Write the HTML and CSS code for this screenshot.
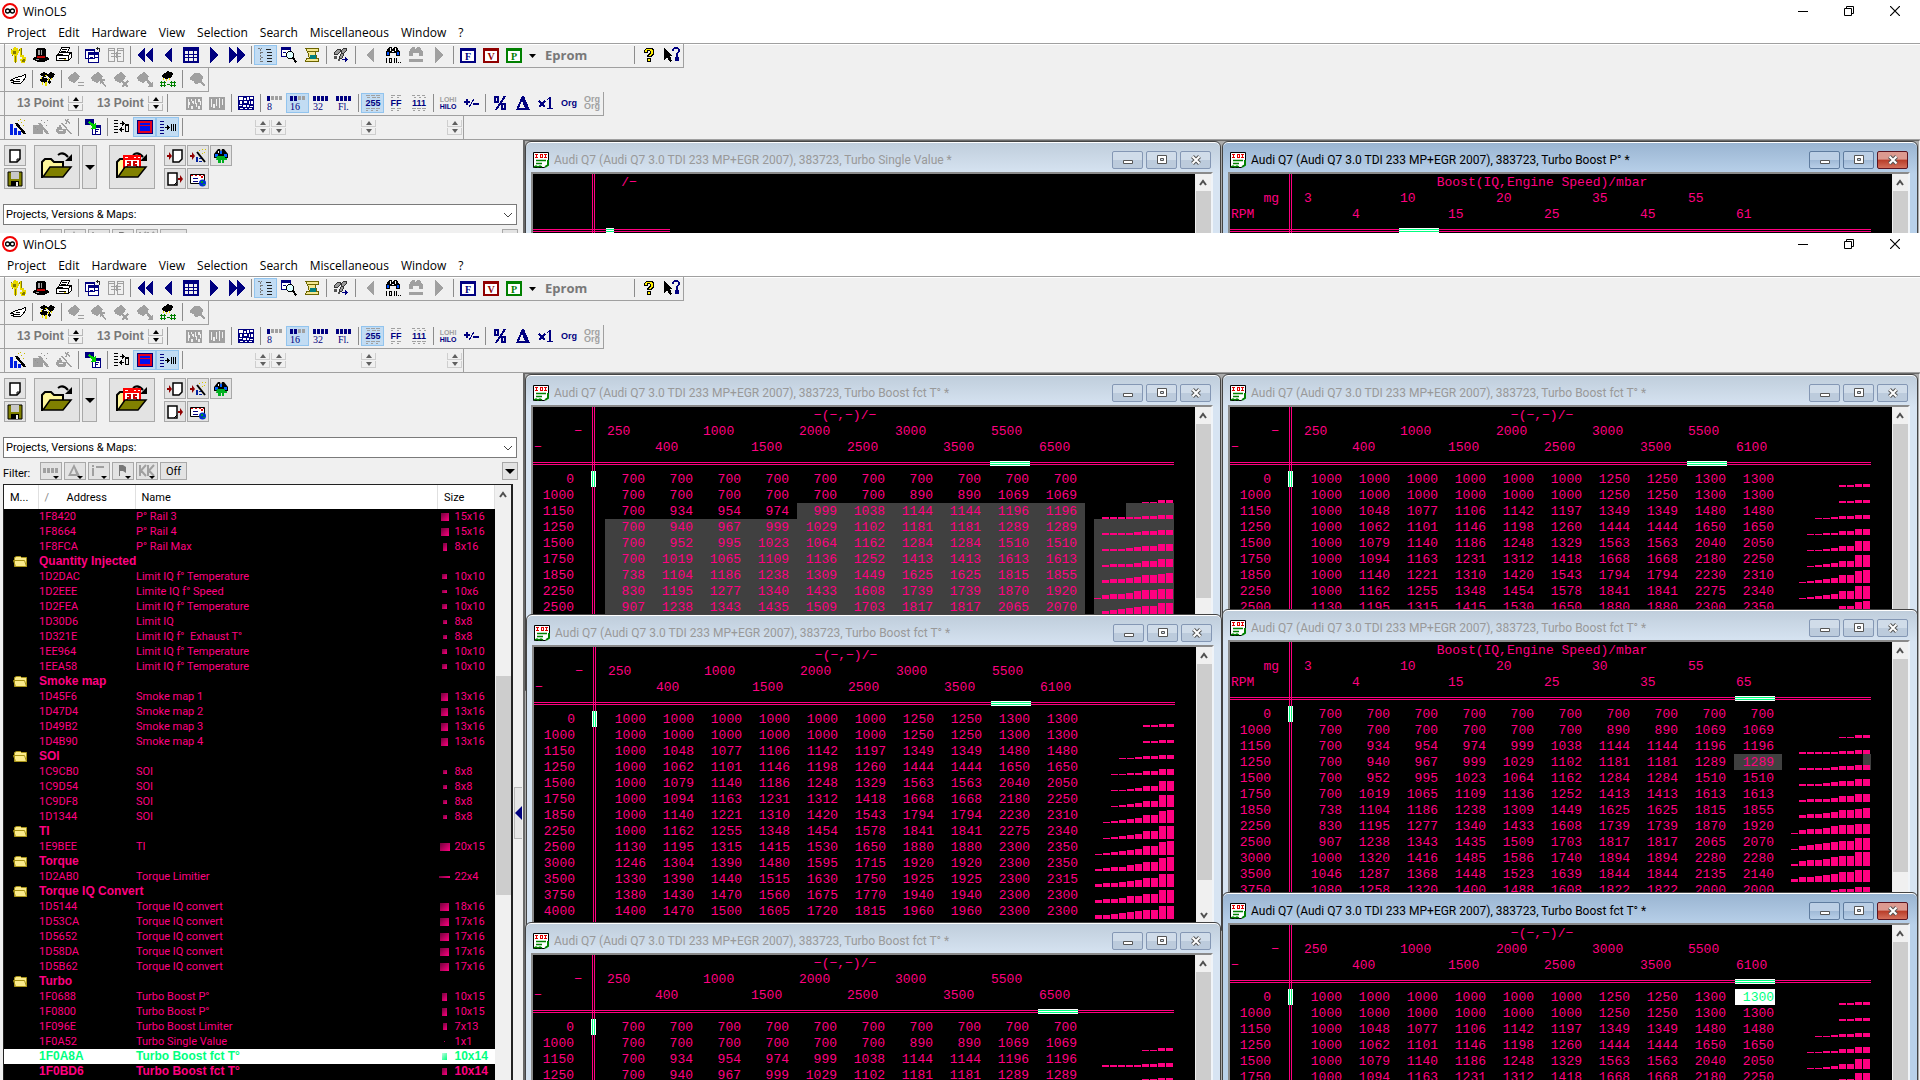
FILE: index.html
```html
<!DOCTYPE html>
<html lang="en">
    <head>
        <meta charset="utf-8">
        <title>WinOLS</title>
        <link rel="stylesheet" href="styles.css">
    </head>
    <body>

        <!-- Icon sheet -->
        <svg class="sheet">
            <symbol id="i-logo" viewBox="0 0 16 16"><circle cx="8" cy="8" r="7" fill="#fff" stroke="#f00000" stroke-width="2"/><circle cx="5.6" cy="8" r="2" fill="none" stroke="#000" stroke-width="1.3"/><circle cx="10.4" cy="8" r="2" fill="none" stroke="#000" stroke-width="1.3"/></symbol>
            <symbol id="i-min" viewBox="0 0 10 10"><path d="M0 5.5h10" stroke="#000"/></symbol>
            <symbol id="i-restore" viewBox="0 0 10 10"><path d="M.5 2.5h7v7h-7zM2.5 2V.5h7v7H8" fill="none" stroke="#000"/></symbol>
            <symbol id="i-close" viewBox="0 0 10 10"><path d="M0 0l10 10M10 0L0 10" stroke="#000" stroke-width="1.2"/></symbol>

            <!-- Toolbar 1 -->
            <symbol id="i-gears" viewBox="0 0 16 16"><path d="M4 0h2v1h2v2h1v3H8v2H7v7H4V8H2V7H1V3h2V1h1zM10 1h2v7h2v2h2v4h-1v2h-4v-2h-1v-2h2v-2h-2z" fill="#e8d800"/><path d="M3 4h2v2H3zM5 9v7M9 2v2M2 8h1M13 12h1v2h-2M1 2h1M11 1v7" fill="#807800" stroke="#807800"/></symbol>
            <symbol id="i-hat" viewBox="0 0 16 16"><path d="M4 1h8v1h1v8h2v1h1v2h-2v1h-2v1H4v-1H2v-1H0v-2h1v-1h2V2h1z" fill="#000"/><path d="M4 9h8v2H4z" fill="#c00000"/><path d="M5 3h2v5H5zM8 3h1v5H8zM3 12h3v1H3z" fill="#a0a0a0"/></symbol>
            <symbol id="i-printer" viewBox="0 0 16 16"><path d="M5.500.5h8l-2 5h-8zM1.500 7.500l2-2h11l-2 3zM.5 8.500h12v5h-12zM12.500 8.500l3-3v5l-3 3M3 11.500h7" fill="#fff" stroke="#000"/><path d="M6 2.500h5M5 4.500h5" stroke="#000"/><path d="M8 12h2v1H8z" fill="#d8c000"/></symbol>
            <symbol id="i-cascade" viewBox="0 0 16 16"><path d="M.5 2.500h9v9h-9zM3.500 5.500h10v10h-10z" fill="#fff" stroke="#000080"/><path d="M0 2h10v2H0zM3 5h11v3H3zM5 10h3v1H5zM10 10h3v1h-3z" fill="#000080"/><path d="M11 1.500h3.500v3M12 0v3" fill="none" stroke="#222"/></symbol>
            <symbol id="i-tiles" viewBox="0 0 16 16"><path d="M.5 1.500h6v13h-6zM9.500 1.500h6v13h-6zM0 3.500h7M9 3.500h7M3 6.500h10M3 9.500h10M8 5v6" fill="none" stroke="#a0a0a0"/></symbol>
            <symbol id="i-first" viewBox="0 0 16 16"><path d="M0 8l8-8v16zM8 8l8-8v16z" fill="#000080"/></symbol>
            <symbol id="i-prev" viewBox="0 0 16 16"><path d="M4 8l8-8v16z" fill="#000080"/></symbol>
            <symbol id="i-grid" viewBox="0 0 16 16"><path d="M0 0h16v16H0z" fill="#000080"/><path d="M2 4h3v3H2zM6 4h4v3H6zM11 4h3v3h-3zM2 8h3v2H2zM6 8h4v2H6zM11 8h3v2h-3zM2 11h3v3H2zM6 11h4v3H6zM11 11h3v3h-3z" fill="#f0f0f0"/></symbol>
            <symbol id="i-next" viewBox="0 0 16 16"><path d="M12 8L4 0v16z" fill="#000080"/></symbol>
            <symbol id="i-last" viewBox="0 0 16 16"><path d="M16 8L8 0v16zM8 8L0 0v16z" fill="#000080"/></symbol>
            <symbol id="i-tree" viewBox="0 0 16 16"><path d="M0 1.500h4M2.500 2v13M3 5.500h3M3 10.500h3M3 14.500h3" stroke="#777" stroke-dasharray="2 1"/><path d="M8 2.500h6M9 5.500h6M9 8.500h6M9 11.500h6M9 14.500h6" stroke="#222" stroke-dasharray="5 1"/></symbol>
            <symbol id="i-find" viewBox="0 0 16 16"><path d="M.5.5h9v9h-9z" fill="#fff" stroke="#000080"/><path d="M0 0h10v3H0zM2 5h3v1H2z" fill="#000080"/><circle cx="9" cy="8" r="3.500" fill="#dff" stroke="#000"/><path d="M11.500 10.500l4 5" stroke="#000" stroke-width="2"/></symbol>
            <symbol id="i-scroll" viewBox="0 0 16 16"><path d="M1.500 1.500h13v3h-11zM3.500 4.500l2 7h7l-1-7zM2.500 11.500h12v3h-13z" fill="#f4e890" stroke="#6b6400"/><path d="M6 8h6v4H6z" fill="#008080"/></symbol>
            <symbol id="i-steps" viewBox="0 0 16 16"><path d="M1.500 5.500l3-3h3v2l-3 3h-3zM8.500 3.500l2-2h3v2l-3 3h-2zM6.500 9.500l2-3h2v2l-2 3h-2z" fill="#999" stroke="#333"/><path d="M1 9h3v3H1zM5 12h2v2H5z" fill="#555"/><path d="M9 12.500h6M12.500 10v5M13.500 11v3" stroke="#000080"/></symbol>
            <symbol id="i-back" viewBox="0 0 16 16"><path d="M4 8l8-8v16z" fill="#a0a0a0"/></symbol>
            <symbol id="i-fwd" viewBox="0 0 16 16"><path d="M12 8L4 0v16z" fill="#a0a0a0"/></symbol>
            <symbol id="i-binoc" viewBox="0 0 16 16"><path d="M4 0h3l1 3 1-3h3l3 5v4h-4V6H5v3H1V5z" fill="#000"/><path d="M2 5h2v3H2zM12 5h2v3h-2z" fill="#0050ff"/><path d="M5 1h1v3H5zM10 1h1v3h-1zM7 4h2v1H7z" fill="#fff"/><path d="M1.500 11v5M9.500 11v5M11.500 11v5M4 11.500h3M4 15.500h3M4.500 11v5M6.500 11v5M13 15.500h1M15 15.500h1" stroke="#000"/></symbol>
            <symbol id="i-binocg" viewBox="0 0 16 16"><path d="M4 0h3l1 3 1-3h3l3 5v4h-4V6H5v3H1V5zM1 12h14v3H1z" fill="#a0a0a0"/></symbol>
            <symbol id="i-f" viewBox="0 0 16 16"><path d="M1 2h14v13H1z" fill="#fff" stroke="#000080" stroke-width="2"/><path d="M1 1h14v3H1z" fill="#000080"/><text x="8" y="13" class="badge" fill="#000080">F</text></symbol>
            <symbol id="i-v" viewBox="0 0 16 16"><path d="M1 2h14v13H1z" fill="#fff" stroke="#900000" stroke-width="2"/><path d="M1 1h14v3H1z" fill="#900000"/><text x="8" y="13" class="badge" fill="#900000">V</text></symbol>
            <symbol id="i-p" viewBox="0 0 16 16"><path d="M1 2h14v13H1z" fill="#fff" stroke="#008000" stroke-width="2"/><path d="M1 1h14v3H1z" fill="#008000"/><text x="8" y="13" class="badge" fill="#008000">P</text></symbol>
            <symbol id="i-help" viewBox="0 0 16 16"><path d="M3 3l2-2h6l2 2v4l-3 3H6V8l3-3V4H7v2H3z" fill="#000"/><path d="M4 5V3l2-1h4l2 2v2L9 9H7l3-3V4L8 3H6v2z" fill="#ffee00"/><path d="M6 11h4v4H6z" fill="#000"/><path d="M7 12h2v2H7z" fill="#ffee00"/></symbol>
            <symbol id="i-what" viewBox="0 0 16 16"><path d="M0 1l9 8H6l2 5-2 1-3-5-3 3z" fill="#000"/><path d="M9 4V2.500L10.500 1h3L15 2.500v2L12.500 7v2.500M11.500 11h2v2h-2z" fill="none" stroke="#000080" stroke-width="2"/></symbol>

            <!-- Toolbar 2 -->
            <symbol id="i-hand" viewBox="0 0 16 16"><path d="M.5 9.500l5-3 5-1 5-2v3l-3 4-2 2h-6l-2-1 3-1-4-1z" fill="#fff" stroke="#000"/><path d="M6 8.500h4M5 10.500h5" stroke="#000"/></symbol>
            <symbol id="i-chips" viewBox="0 0 16 16"><path d="M1 3l4-2 4 2-3 3-4-1zM8 4l4-3 4 2-1 3-4 2zM0 9l4-3 5 2-2 4-4-1zM8 8l3 0 1 3-2 2z" fill="#000"/><path d="M6 4h2v1H6zM2 6h1v2H2zM9 7h1v3H9zM12 7h1v2h-1zM3 11h1v3H3zM6 11h2v4H6z" fill="#e8e000"/></symbol>
            <symbol id="i-chip1" viewBox="0 0 16 16"><path d="M0 6l7-5 5 4-2 4-3 2-1 2-2-2-3-1zM10 11h6v1h-6zM10 14h6v1h-6z" fill="#a0a0a0"/></symbol>
            <symbol id="i-chip2" viewBox="0 0 16 16"><path d="M0 6l7-5 5 4-2 4-3 2-1 2-2-2-3-1zM9 8h5v2h-2l3 5-1 1-4-4-1 1z" fill="#a0a0a0"/></symbol>
            <symbol id="i-chip3" viewBox="0 0 16 16"><path d="M0 6l7-5 5 4-2 4-3 2-1 2-2-2-3-1z" fill="#a0a0a0"/><path d="M8 10l6 6M14 10l-6 6" stroke="#a0a0a0" stroke-width="1.500"/></symbol>
            <symbol id="i-chip4" viewBox="0 0 16 16"><path d="M0 6l7-5 5 4-2 4-3 2-1 2-2-2-3-1zM9 9l2-1 3 4 2-1v5h-5l1-2z" fill="#a0a0a0"/></symbol>
            <symbol id="i-chipn" viewBox="0 0 16 16"><path d="M2 4l6-4 5 2-1 4-5 2-4-1z" fill="#000"/><path d="M3 7h1v2H3zM6 8h1v2H6zM9 7h1v2H9z" fill="#e8e000"/><path d="M0 11.500h6M0 14.500h6M1.500 10v6M4.500 10v6M7 13h3M10 11.500h6M10 14.500h6M11.500 10v6M14.500 10v6" stroke="#008000"/></symbol>
            <symbol id="i-chipf" viewBox="0 0 16 16"><path d="M1 6l4-4h6l3 4-1 5 3 3-1 1-4-3-5 1-1-3-4-1z" fill="#a0a0a0"/></symbol>

            <!-- Toolbar 3 -->
            <symbol id="i-wave1" viewBox="0 0 16 16"><path d="M0 2h16v13H0z" fill="#a0a0a0"/><path d="M2 4h1v3h1v3H3v3H2zM5 4h1v2h2v3H7V8H6V6H5zM9 4h1v4h1v4h-1V9H9zM12 4h2v2h1v4h-1V7h-2zM5 11h2v3H5zM12 11h2v3h-2z" fill="#f0f0f0"/></symbol>
            <symbol id="i-wave2" viewBox="0 0 16 16"><path d="M0 2h16v13H0z" fill="#a0a0a0"/><path d="M2 4h1v8H2zM4 9h2v4H4zM7 4h1v7H7zM10 3h1v10h-1zM13 4h1v6h-1z" fill="#f0f0f0"/></symbol>
            <symbol id="i-table" viewBox="0 0 16 16"><path d="M0 1h16v14H0z" fill="#000080"/><path d="M1 2h4v3H1zM6 3h2v2H6zM9 2h2v3H9zM12 2h3v2h-3zM2 6h2v3H2zM6 6h3v2H6zM11 6h1v3h-1zM13 6h2v3h-2zM1 10h3v1H1zM5 10h3v2H5zM9 10h2v2H9zM12 11h3v1h-3zM2 13h3v1H2zM7 13h2v1H7zM11 13h3v1h-3z" fill="#fff"/></symbol>
            <symbol id="i-b8" viewBox="0 0 16 16"><path d="M0 1h3v5H0z" fill="#000080"/><path d="M4 1h3v4H4zM8 1h3v4H8zM12 1h3v4h-3z" fill="#a0a0a0"/><text x="0" y="15" class="bits">8</text></symbol>
            <symbol id="i-b16" viewBox="0 0 16 16"><path d="M0 1h3v5H0zM4 1h3v5H4z" fill="#000080"/><path d="M8 1h3v4H8zM12 1h3v4h-3z" fill="#a0a0a0"/><text x="0" y="15" class="bits">16</text></symbol>
            <symbol id="i-b32" viewBox="0 0 16 16"><path d="M0 1h3v5H0zM4 1h3v5H4zM8 1h3v5H8zM12 1h3v5h-3z" fill="#000080"/><text x="0" y="15" class="bits">32</text></symbol>
            <symbol id="i-bfl" viewBox="0 0 16 16"><path d="M0 1h3v5H0zM4 1h3v5H4zM8 1h3v5H8zM12 1h3v5h-3z" fill="#000080"/><text x="2" y="15" class="bits">Fl.</text></symbol>
            <symbol id="i-dec" viewBox="0 0 16 16"><path d="M1 .5h4M6 .5h4M11 .5h4M2 2.500h3M7 2.500h4M12 2.500h3M1 13.500h4M6 13.500h4M11 13.500h4M1 15.500h2M6 15.500h2M11 15.500h2" stroke="#a0a0a0"/><text x="8" y="11" class="num">255</text></symbol>
            <symbol id="i-hex" viewBox="0 0 16 16"><path d="M3 .5h4M9 .5h4M3 2.500h2M9 2.500h2M3 13.500h4M9 13.500h4M3 15.500h2M9 15.500h2" stroke="#a0a0a0"/><text x="8" y="11" class="num">FF</text></symbol>
            <symbol id="i-bin" viewBox="0 0 16 16"><path d="M1 .5h3M6 .5h3M11 .5h3M3 2.500h2M8 2.500h2M13 2.500h2M1 13.500h4M6 13.500h4M11 13.500h4M2 15.500h2M7 15.500h2M12 15.500h2" stroke="#a0a0a0"/><text x="8" y="11" class="num">111</text></symbol>
            <symbol id="i-hilo" viewBox="0 0 18 16"><text x="9" y="7" class="tiny" fill="#a0a0a0">LOHI</text><text x="9" y="14" class="tiny" fill="#000080">HILO</text></symbol>
            <symbol id="i-sign" viewBox="0 0 16 16"><path d="M1 7h6M4 4v6M10 9h6" stroke="#000080" stroke-width="2"/><path d="M6 12l5-8" stroke="#000080"/></symbol>
            <symbol id="i-pct" viewBox="0 0 16 16"><path d="M4 15L13 1" stroke="#000080" stroke-width="2"/><path d="M3 2h3v5H3zM10 9h3v5h-3z" fill="none" stroke="#000080" stroke-width="2"/></symbol>
            <symbol id="i-delta" viewBox="0 0 16 16"><path d="M7 1h2l6 14H1zM7 6l-3 7h6z" fill="#000080" fill-rule="evenodd"/></symbol>
            <symbol id="i-x1" viewBox="0 0 16 16"><path d="M1 6l6 6M7 6l-6 6" stroke="#000080" stroke-width="2"/><path d="M9 4.500l2-1M9 13.500h6" stroke="#000080"/><path d="M11 2h2v12h-2z" fill="#000080"/></symbol>
            <symbol id="i-org" viewBox="0 0 18 16"><text x="9" y="11" class="num">Org</text></symbol>
            <symbol id="i-orgs" viewBox="0 0 18 16"><text x="9" y="7" class="num off">Org</text><text x="9" y="14" class="num off">Org</text></symbol>

            <!-- Toolbar 4 -->
            <symbol id="i-wiz" viewBox="0 0 16 16"><path d="M0 5h3v11H0zM4 9h3v7H4zM8 12h3v4H8z" fill="#0020e0"/><path d="M6 4l9 11" stroke="#000" stroke-width="2.500"/><path d="M8 1h1v1H8zM11 3h1v1h-1zM14 1h1v1h-1zM13 6h1v1h-1zM10 0h1v1h-1z" fill="#c8b800"/></symbol>
            <symbol id="i-wiz1" viewBox="0 0 16 16"><path d="M0 6h7v2h3v7H0z" fill="#a0a0a0"/><path d="M6 4l9 11" stroke="#a0a0a0" stroke-width="2.500"/><path d="M8 1h1v1H8zM11 3h1v1h-1zM14 1h1v1h-1zM13 6h1v1h-1zM2 8h1v1H2zM4 10h1v1H4z" fill="#909090"/></symbol>
            <symbol id="i-wiz2" viewBox="0 0 16 16"><path d="M1 8h5v2h4v3l-2 2H2l-2-3zM3 6h2v2H3z" fill="#a0a0a0"/><path d="M6 4l9 11M9 1l5 3M12 0l-2 5M2 11h6" stroke="#a0a0a0" stroke-width="1.500"/><path d="M3 11h4v1H3z" fill="#f0f0f0"/></symbol>
            <symbol id="i-swap" viewBox="0 0 16 16"><path d="M0 0h9v6H0z" fill="#000080"/><path d="M7 6h9v10H7z" fill="#000080"/><path d="M8 9h7v6H8z" fill="#fff"/><path d="M4 2l5 3 2-2v7H5l2-2-4-4z" fill="#00d000"/><path d="M10 10h4v1h-3v1h2v1h-2v2h-1z" fill="#000080"/></symbol>
            <symbol id="i-sync" viewBox="0 0 16 16"><path d="M0 1.500h4M0 4.500h4M0 7.500h4M0 10.500h4M0 13.500h4M6 4.500h4M6 10.500h4" stroke="#000"/><path d="M8 2l3 2.500L8 7zM8 8l-3 2.500L8 13zM11 5h4v8h-4zM12 7h2v5h-2z" fill="#000" fill-rule="evenodd"/></symbol>
            <symbol id="i-red" viewBox="0 0 16 16"><path d="M0 1h16v14H0z" fill="#000080"/><path d="M2 3h12v10H2z" fill="#0010f0" stroke="#e00020" stroke-width="2"/><path d="M2 6h12" stroke="#e00020"/></symbol>
            <symbol id="i-split" viewBox="0 0 16 16"><path d="M0 2.500h4M0 5.500h4M0 8.500h4M0 11.500h4M0 14.500h4" stroke="#000080"/><path d="M5 8.500h4M11.500 5v7M13.500 5v7M15.500 5v7" stroke="#000"/><path d="M7 6l3 2.500L7 11z" fill="#000"/></symbol>

            <!-- Side panel -->
            <symbol id="i-new" viewBox="0 0 16 16"><path d="M3 2h10v9l-3 3H3z" fill="#fff" stroke="#000" stroke-width="1.500"/><path d="M13 11h-3v3" fill="none" stroke="#000"/></symbol>
            <symbol id="i-save" viewBox="0 0 16 16"><path d="M1 1h14v14H1z" fill="#808000" stroke="#000"/><path d="M4 1h8v7H4z" fill="#c8c8c8"/><path d="M4 10h8v5H4z" fill="#000"/><path d="M9 11h2v4H9z" fill="#eee"/></symbol>
            <symbol id="i-open" viewBox="0 0 32 32"><path d="M1 27V11l3-3h6l3 3h9v5" fill="#fdf59a" stroke="#000" stroke-width="2"/><path d="M2 26l7-10h21l-8 10z" fill="#808000" stroke="#000" stroke-width="1.500"/><path d="M17 4q5-4 10 2" fill="none" stroke="#000" stroke-width="2"/><path d="M31 3v7h-7z" fill="#000"/></symbol>
            <symbol id="i-openr" viewBox="0 0 32 32"><path d="M1 27V11l3-3h6l3 3h9v5" fill="#fdf59a" stroke="#000" stroke-width="2"/><path d="M17 4q5-4 10 2" fill="none" stroke="#000" stroke-width="2"/><path d="M31 3v7h-7z" fill="#000"/><path d="M7 4h18v15H7z" fill="#f00"/><path d="M9 6h3v1H9zM18 6h2v1h-2zM22 6h2v1h-2zM9 9h14v8H9z" fill="#fff"/><path d="M11 11h3v3h-3M21 11h-3v3h3M11 17v-2M21 17v-2" fill="none" stroke="#c00" stroke-width="2"/><path d="M2 26l7-10h21l-8 10z" fill="#808000" stroke="#000" stroke-width="1.500"/></symbol>
            <symbol id="i-import" viewBox="0 0 16 16"><path d="M6 2h9v9l-3 3H6z" fill="#fff" stroke="#000" stroke-width="1.500"/><path d="M0 7h2V4l3 4-3 4V9H0z" fill="#900000"/></symbol>
            <symbol id="i-impwiz" viewBox="0 0 16 16"><path d="M0 7h2V4l3 4-3 4V9H0z" fill="#900000"/><path d="M6 9h2v5H6zM9 10h4v1H9zM9 13h3v1H9z" fill="#0020a0"/><path d="M7 4l8 10" stroke="#000" stroke-width="2"/><path d="M9 2h1v1H9zM12 1h1v1h-1zM14 4h1v1h-1zM12 5h1v1h-1zM15 1h1v1h-1z" fill="#d8c800"/></symbol>
            <symbol id="i-globe" viewBox="0 0 16 16"><path d="M5 1h2l1 3 1-3h2l4 5v4h-4v4H9V9H7v5H5v-4H1V6z" fill="#000"/><path d="M2 6h3v3H2zM11 6h3v3h-3zM7 3h2v3H7z" fill="#0060ff"/><path d="M4 8h8v2h2v2h-3v3H9v-3H8v3H5v-3H3z" fill="#00b020"/><path d="M5 3h1v2H5z" fill="#fff"/></symbol>
            <symbol id="i-export" viewBox="0 0 16 16"><path d="M1 2h9v12H1z" fill="#fff" stroke="#000" stroke-width="1.500"/><path d="M10 11l-3 3" stroke="#000"/><path d="M11 7h2V4l3 4-3 4V9h-2z" fill="#900000"/></symbol>
            <symbol id="i-mail" viewBox="0 0 16 16"><path d="M.5 3.500h14v9H.5z" fill="#fff" stroke="#000"/><path d="M1 4.500h13" stroke="#e00000" stroke-dasharray="2 2"/><path d="M3 7.500h5M3 10.500h5" stroke="#000080"/><path d="M11 5h2v2h-2z" fill="#e00000"/><circle cx="12.500" cy="12" r="3.500" fill="#0030d0"/><path d="M11 10h2v2h-2zM13 13h2v1h-2z" fill="#00a020"/></symbol>
            <symbol id="i-fbars" viewBox="0 0 16 16"><path d="M0 5h3v5H0zM4 5h3v5H4zM8 5h3v5H8zM12 5h3v5h-3z" fill="#a0a0a0"/><path d="M10 13h6l-3 3z" fill="#000"/></symbol>
            <symbol id="i-fdelta" viewBox="0 0 16 16"><path d="M7 1l6 12H1zM7 5l-3 6h5z" fill="#a0a0a0" fill-rule="evenodd"/><path d="M10 13h6l-3 3z" fill="#000"/></symbol>
            <symbol id="i-fi" viewBox="0 0 16 16"><path d="M1 2h2v2H1zM1 5h2v8H1zM5 3h8v2H5z" fill="#a0a0a0"/><path d="M10 13h6l-3 3z" fill="#000"/></symbol>
            <symbol id="i-fflag" viewBox="0 0 16 16"><path d="M4 2h4l3 2v6L8 8H5v5H4z" fill="#777"/><path d="M10 13h6l-3 3z" fill="#000"/></symbol>
            <symbol id="i-fkk" viewBox="0 0 16 16"><path d="M1 2v11M7 2L2 7.500 7 13M9 2v11M15 2l-5 5.500 5 5.500" fill="none" stroke="#a0a0a0" stroke-width="2"/><path d="M10 13h6l-3 3z" fill="#000"/></symbol>
            <symbol id="i-down" viewBox="0 0 16 16"><path d="M3 6h10l-5 5z" fill="#000"/></symbol>
            <symbol id="i-down-s" viewBox="0 0 16 16"><path d="M4 7h7l-3.500 4z" fill="#000"/></symbol>
            <symbol id="i-folder" viewBox="0 0 15 13"><path d="M1.500 11.500V2.500l2-1h4l1 1h5v9zM.5 5.500h11l2 6h-11z" fill="#fbeb8c" stroke="#a89418"/></symbol>
            <symbol id="i-map" viewBox="0 0 16 16"><path d="M.5.5h15v11l-4 4H.5z" fill="#fff" stroke="#000"/><path d="M2 2.500h3M3.500 2v4M2 5.500h3M7 2.500h3M7.500 2v4M9.500 2v4M7 5.500h3M11 2.500h3M12.500 2v4M11 5.500h3" stroke="#e00000"/><path d="M3 8.500h10M3 11.500h6M1 15l2-1 2 1 2-1 2 1" fill="none" stroke="#008000" stroke-width="1.500"/><path d="M15 8v5l-3 2" fill="none" stroke="#008000" stroke-width="2"/></symbol>
            <symbol id="i-up" viewBox="0 0 8 8"><path d="M1 6l3-4 3 4" fill="none" stroke="#505050" stroke-width="2"/></symbol>
            <symbol id="i-dn" viewBox="0 0 8 8"><path d="M1 2l3 4 3-4" fill="none" stroke="#505050" stroke-width="2"/></symbol>
            <symbol id="i-wmin" viewBox="0 0 12 10"><path d="M1.500 5.500h9v3h-9z" fill="#fff" stroke="#555"/></symbol>
            <symbol id="i-wmax" viewBox="0 0 12 10"><path d="M1.500.5h9v8h-9zM4.500 3.500h3v2h-3z" fill="#fff" stroke="#555" fill-rule="evenodd"/></symbol>
            <symbol id="i-wx" viewBox="0 0 12 10"><path d="M2.500 1.500l7 7M9.500 1.500l-7 7" stroke="#555" stroke-width="4"/><path d="M2.500 1.500l7 7M9.500 1.500l-7 7" stroke="#fff" stroke-width="2"/></symbol>
        </svg>

        <div class="app app-back" id="back"></div>
        <div class="app app-front" id="front"></div>

        <!-- Shared frame: title, menu, toolbars, side panel -->
        <template id="frame">
            <header class="titlebar">
                <svg class="logo"><use href="#i-logo"/></svg>
                <span class="app-name">WinOLS</span>
                <button class="sys"><svg><use href="#i-min"/></svg></button>
                <button class="sys"><svg><use href="#i-restore"/></svg></button>
                <button class="sys"><svg><use href="#i-close"/></svg></button>
            </header>
            <nav class="menu">
                <button>Project</button>
                <button>Edit</button>
                <button>Hardware</button>
                <button>View</button>
                <button>Selection</button>
                <button>Search</button>
                <button>Miscellaneous</button>
                <button>Window</button>
                <button>?</button>
            </nav>
            <div class="toolbars"></div>
            <main class="work">
                <aside class="side">
                    <div class="files">
                        <div class="stack">
                            <button class="sq"><svg><use href="#i-new"/></svg></button>
                            <button class="sq"><svg><use href="#i-save"/></svg></button>
                        </div>
                        <div class="big-group">
                            <button class="big"><svg><use href="#i-open"/></svg></button>
                            <button class="drop"><svg><use href="#i-down"/></svg></button>
                        </div>
                        <button class="big"><svg><use href="#i-openr"/></svg></button>
                        <div class="small-grid">
                            <button class="sq"><svg><use href="#i-import"/></svg></button>
                            <button class="sq"><svg><use href="#i-impwiz"/></svg></button>
                            <button class="sq"><svg><use href="#i-globe"/></svg></button>
                            <button class="sq"><svg><use href="#i-export"/></svg></button>
                            <button class="sq"><svg><use href="#i-mail"/></svg></button>
                        </div>
                    </div>
                    <div class="combo">
                        <select aria-label="View"><option>Projects, Versions &amp; Maps:</option></select>
                        <svg class="chevron" viewBox="0 0 10 6"><path d="M1 1l4 4 4-4" fill="none" stroke="#444"/></svg>
                    </div>
                    <div class="filter">
                        <span class="filter-label">Filter:</span>
                        <button><svg><use href="#i-fbars"/></svg></button>
                        <button><svg><use href="#i-fdelta"/></svg></button>
                        <button><svg><use href="#i-fi"/></svg></button>
                        <button><svg><use href="#i-fflag"/></svg></button>
                        <button><svg><use href="#i-fkk"/></svg></button>
                        <button class="off-btn">Off</button>
                        <button class="more"><svg><use href="#i-down"/></svg></button>
                    </div>
                    <div class="list-row">
                        <div class="list">
                            <table class="maps">
                                <colgroup><col class="c-m"><col class="c-addr"><col><col class="c-size"></colgroup>
                                <thead><tr><th>M...</th><th><span class="sort">/</span>Address</th><th>Name</th><th>Size</th></tr></thead>
                                <tbody></tbody>
                            </table>
                            <div class="scroll list-scroll"><button><svg><use href="#i-up"/></svg></button><i class="thumb"></i></div>
                        </div>
                        <button class="handle"><i></i></button>
                    </div>
                </aside>
                <section class="mdi"></section>
            </main>
        </template>

        <script src="script.js"></script>
    </body>
</html>
```
FILE: styles.css
```css
* {
    margin: 0;
    padding: 0;
    box-sizing: border-box;
}

body {
    height: 100vh;
    display: flex;
    flex-direction: column;
    overflow: hidden;
    background-color: #f0f0f0;
    font-family: "Open Sans", "Noto Sans", sans-serif;
    font-size: 12px;
    color: #000;
}

button {
    font: inherit;
    color: inherit;
    background: none;
    border: none;
}

svg {
    display: block;
}

.sheet {
    display: none;
}

/* One program window */
.app {
    display: flex;
    flex-direction: column;
    overflow: hidden;
}

.app-back {
    height: 233px;
    flex: none;
}

.app-front {
    flex: 1;
    min-height: 0;
}

.titlebar {
    flex: none;
    height: 22px;
    display: flex;
    align-items: center;
    background-color: #fff;
    padding: 0 2px;
}

.logo {
    width: 16px;
    height: 16px;
}

.app-name {
    margin-left: 5px;
    flex: 1;
}

.sys {
    width: 46px;
    height: 20px;
    display: flex;
    justify-content: center;
    align-items: center;
}

.sys svg {
    width: 10px;
    height: 10px;
}

.menu {
    flex: none;
    height: 21px;
    display: flex;
    align-items: center;
    gap: 12px;
    padding-left: 7px;
    background-color: #fff;
    line-height: 16px;
}

/* Toolbars */
.toolbars {
    flex: none;
    border-top: 1px solid #a0a0a0;
    border-bottom: 1px solid #a0a0a0;
    box-shadow: inset 0 1px #fff;
}

.toolbar {
    display: flex;
    align-items: center;
    width: fit-content;
    height: 24px;
    padding: 0 0 1px 6px;
    border-right: 1px solid #a0a0a0;
    border-bottom: 1px solid #a0a0a0;
    background: linear-gradient(#a0a0a0, #a0a0a0) 4px 0 / 1px 100% no-repeat;
}

.toolbar:last-child {
    height: 23px;
    border-bottom: none;
}

.tool {
    width: 23px;
    height: 20px;
    display: flex;
    justify-content: center;
    align-items: center;
}

.tool svg {
    width: 16px;
    height: 16px;
    shape-rendering: crispEdges;
}

.tool.wide svg {
    width: 18px;
}

.tool.on {
    background-color: #c2dcf3;
    border: 1px solid #92c4ee;
}

.sep {
    width: 6px;
    height: 18px;
    background: linear-gradient(#8c8c8c, #8c8c8c) 3px 0 / 1px 100% no-repeat;
}

.gap-s { width: 12px; }
.gap-m { width: 70px; }
.gap-l { width: 74px; }
.gap-xl { width: 70px; }

.drop-arrow {
    width: 16px;
}

.drop-arrow svg {
    width: 16px;
    height: 16px;
}

.eprom {
    width: 90px;
    padding-left: 4px;
    font: bold 13px "Open Sans", sans-serif;
    color: #787878;
}

.points {
    width: 58px;
    font: bold 12px "Liberation Sans", sans-serif;
    color: #777;
    white-space: nowrap;
}

.points.first {
    width: 62px;
    padding-left: 11px;
}

.points.next {
    width: 64px;
    padding-left: 13px;
}

.spin {
    width: 15px;
    margin-right: 1px;
    display: flex;
    flex-direction: column;
    gap: 1px;
}

.spin button {
    width: 15px;
    height: 7px;
    border: 1px solid #b8b8b8;
    border-top: none;
    display: flex;
    justify-content: center;
    align-items: center;
}

.spin svg {
    width: 6px;
    height: 4px;
}

.spin.dim {
    opacity: 0.6;
}

.badge {
    font: bold 10px "Liberation Serif", serif;
    text-anchor: middle;
}

.bits {
    font: 10px "Liberation Serif", serif;
    fill: #000080;
}

.num {
    font: bold 9px "Liberation Sans", sans-serif;
    text-anchor: middle;
    fill: #000080;
}

.num.off {
    fill: #a0a0a0;
}

.tiny {
    font: bold 7px "Liberation Sans", sans-serif;
    text-anchor: middle;
}

/* Work area */
.work {
    flex: 1;
    min-height: 0;
    display: flex;
}

.side {
    width: 523px;
    flex: none;
    display: flex;
    flex-direction: column;
    padding: 5px 0 0 3px;
    font-family: Roboto, sans-serif;
    font-size: 11px;
}

.files {
    display: flex;
    height: 44px;
    padding-left: 1px;
    margin-bottom: 15px;
    flex: none;
}

.stack {
    display: flex;
    flex-direction: column;
    gap: 2px;
    margin-right: 8px;
}

.big-group {
    display: flex;
    gap: 2px;
    margin-right: 12px;
}

.small-grid {
    display: grid;
    grid-template-columns: repeat(3, 22px);
    gap: 2px 1px;
    margin-left: 9px;
}

.sq,
.big,
.drop,
.filter button {
    display: flex;
    justify-content: center;
    align-items: center;
    border: 1px solid #a8a8a8;
    background-color: #e3e3e3;
}

.sq {
    width: 22px;
    height: 21px;
}

.sq svg,
.drop svg,
.filter svg {
    width: 16px;
    height: 16px;
    flex: none;
}

.big {
    width: 46px;
    height: 44px;
}

.big svg {
    width: 32px;
    height: 32px;
}

.drop {
    width: 15px;
    height: 44px;
}

.combo {
    position: relative;
    margin: 0 6px 4px 0;
    flex: none;
}

.combo select {
    display: block;
    appearance: none;
    width: 100%;
    height: 21px;
    padding-left: 2px;
    border: 1px solid #7a7a7a;
    border-radius: 0;
    background-color: #fff;
    color: #000;
    font: 11px Roboto, sans-serif;
}

.chevron {
    position: absolute;
    right: 4px;
    top: 8px;
    width: 10px;
    height: 6px;
}

.filter {
    display: flex;
    align-items: center;
    gap: 2px;
    height: 18px;
    margin: 0 5px 4px 0;
    flex: none;
}

.filter-label {
    width: 35px;
    padding-top: 4px;
}

.filter button {
    width: 22px;
    height: 18px;
}

.filter .off-btn {
    width: 27px;
}

.filter .more {
    width: 16px;
    margin-left: auto;
}

.list-row {
    flex: 1;
    min-height: 0;
    display: flex;
    gap: 1px;
}

.list {
    width: 510px;
    display: flex;
    overflow: hidden;
    border: 1px solid #222;
    border-right-width: 2px;
    border-bottom: none;
    background-color: #000;
}

.maps {
    flex: 1;
    height: fit-content;
    table-layout: fixed;
    border-collapse: collapse;
    color: #ff0080;
}

.c-m { width: 34px; }
.c-addr { width: 97px; }
.c-size { width: 57px; }

.maps th {
    height: 24px;
    padding-left: 6px;
    background-color: #fff;
    border-right: 1px solid #e0e0e0;
    color: #000;
    font-weight: normal;
    text-align: left;
}

.maps .sort {
    display: inline-block;
    width: 22px;
    color: #888;
}

.maps td {
    height: 15px;
    line-height: 15px;
    padding-left: 1px;
    white-space: pre;
}

.maps .folder td,
.maps .strong td {
    font: bold 12px/15px "Liberation Sans", sans-serif;
}

.maps .folder svg {
    width: 15px;
    height: 13px;
    margin-left: 8px;
}

.maps .picked td {
    background-color: #fff;
    color: #00ff80;
}

.size {
    display: flex;
    align-items: center;
}

.size-box {
    width: 12px;
    margin-right: 4px;
    display: flex;
    justify-content: center;
}

.size-box i {
    background: linear-gradient(135deg, #70003a, #ff0080);
}

.picked .size-box i {
    background: linear-gradient(135deg, #c0ffe0, #00ff80);
}

.handle {
    width: 8px;
    height: 52px;
    margin-top: 303px;
    border: 1px solid #b8b8b8;
    border-right: none;
    background-color: #e6e6e6;
    display: flex;
    align-items: center;
    justify-content: flex-end;
}

.handle i {
    border: 7px solid transparent;
    border-left: none;
    border-right-color: #000080;
}

/* Scroll bars */
.scroll {
    width: 16px;
    flex: none;
    display: flex;
    flex-direction: column;
    background-color: #f0f0f0;
}

.scroll button {
    height: 17px;
    flex: none;
    display: flex;
    justify-content: center;
    align-items: center;
}

.scroll svg {
    width: 8px;
    height: 8px;
}

.scroll .thumb {
    display: block;
    width: 15px;
    margin-left: 1px;
    background-color: #cdcdcd;
}

.list-scroll button {
    height: 20px;
}

.list-scroll .thumb {
    margin-top: 171px;
    height: 219px;
    flex: none;
}

/* Map windows */
.mdi {
    position: relative;
    flex: 1;
    overflow: hidden;
    background-color: #ababab;
    border-left: 2px solid #696969;
    border-top: 1px solid #696969;
    border-right: 1px solid #f0f0f0;
}

.win {
    position: absolute;
    width: calc(50% - 1px);
    height: 317px;
    display: flex;
    flex-direction: column;
    padding: 9px 7px 7px 5px;
    border: 1px solid #444;
    border-radius: 6px 6px 0 0;
    background: linear-gradient(#bfcddb, #d7e4f2 32px);
    box-shadow: inset 0 1px #fff;
    color: #999;
}

.win.active {
    background: linear-gradient(#99b4d1, #b9d1ea 32px);
    color: #000;
}

.left { left: 0; }
.right { left: 50%; }
.l1, .r1 { top: 0; }
.l2 { top: 240px; left: 1px; }
.l3 { top: 548px; }
.r2 { top: 235px; }
.r3 { top: 518px; }

.win-title {
    display: flex;
    align-items: center;
    gap: 3px;
    height: 18px;
    flex: none;
    padding: 0 2px;
    margin-bottom: 3px;
    font-family: Roboto, sans-serif;
}

.win-title span {
    flex: 1;
    padding-left: 2px;
    white-space: nowrap;
}

.win-title > svg {
    width: 16px;
    height: 16px;
}

.win-title button {
    width: 31px;
    height: 18px;
    display: flex;
    justify-content: center;
    align-items: center;
    border: 1px solid #8497b4;
    border-radius: 2px;
    background: linear-gradient(#d0dce9 50%, #bccbdc 50%);
}

.win-title button svg {
    width: 12px;
    height: 10px;
}

.active .win-title button {
    border-color: #5f7c9f;
    background: linear-gradient(#bccfe5 50%, #9fb9d6 50%, #b8cfe8);
}

.active .win-title button:last-child {
    border-color: #5a1420;
    background: linear-gradient(#dc9a90 45%, #b83c28 50%, #d4705c);
}

.client {
    flex: 1;
    min-height: 0;
    display: flex;
    overflow: hidden;
    border: 2px solid #8a8a8a;
    border-right-color: #f0f4f8;
    border-bottom: none;
    background-color: #000;
}

/* Double rule beside the row heads */
.map-view {
    flex: 1;
    overflow: hidden;
    background:
        linear-gradient(#ff0080, #ff0080) 59px 0 / 1px 100% no-repeat,
        linear-gradient(#ff0080, #ff0080) 61px 0 / 1px 100% no-repeat;
}

.map {
    table-layout: fixed;
    border-collapse: collapse;
    width: 0;
    color: #ff0080;
    font: 13px "Liberation Mono", monospace;
}

.map th,
.map td {
    height: 16px;
    padding-top: 2px;
    line-height: 14px;
    font-weight: normal;
    white-space: nowrap;
}

.k-head { width: 72px; }
.k-cell { width: 48px; }
.k-gap { width: 9px; }
.k-bars { width: 80px; }
.k-bar1 { width: 8px; }

.map .caption {
    text-align: center;
}

.map .unit-x {
    text-align: right;
    padding-right: 23px;
}

.map .unit-y {
    text-align: left;
    padding-left: 1px;
}

.map .x {
    text-align: left;
    padding-left: 2px;
}

.map .row-head {
    text-align: right;
    padding-right: 31px;
}

.map td {
    text-align: right;
    padding-right: 8px;
}

/* Double rule under the column heads */
.map .rule td {
    padding: 0;
    background:
        linear-gradient(#ff0080, #ff0080) 0 7px / 100% 1px no-repeat,
        linear-gradient(#ff0080, #ff0080) 0 9px / 100% 1px no-repeat;
}

.map .rule .mark {
    background:
        linear-gradient(#00ff80, #00ff80) 1px 7px / 40px 1px no-repeat,
        linear-gradient(#00ff80, #00ff80) 1px 9px / 40px 1px no-repeat,
        linear-gradient(#fff, #fff) 1px 6px / 40px 5px no-repeat,
        linear-gradient(#ff0080, #ff0080) 0 7px / 100% 1px no-repeat,
        linear-gradient(#ff0080, #ff0080) 0 9px / 100% 1px no-repeat;
}

.map.single .rule .mark {
    background-size: 8px 1px, 8px 1px, 8px 5px, 100% 1px, 100% 1px;
}

.map .row-mark {
    background: linear-gradient(90deg, #fff 1px, #00ff80 1px 2px, #fff 2px 3px, #00ff80 3px 4px, #fff 4px) 58px 0 / 5px 16px no-repeat;
}

.map .sel {
    background-color: #404040;
}

.map .cursor {
    color: #00ff80;
    background: linear-gradient(#fff, #fff) 1px 0 / 40px 100% no-repeat;
}

.map .bars {
    padding: 0;
}

.bars div {
    display: flex;
    height: 16px;
}

.bars span {
    width: 8px;
    display: flex;
    align-items: flex-end;
}

.bars i {
    width: 7px;
    background-color: #ff0080;
}

/* Scroll positions */
.l1 .thumb { height: 174px; margin-bottom: 40px; }
.l2 .thumb { height: 217px; margin-bottom: 26px; }
.r2 .thumb { height: 213px; margin-bottom: 26px; }
.l3 .thumb,
.r1 .thumb,
.r3 .thumb { height: 260px; }
```
FILE: script.js
```js
const NAME = 'Audi Q7 (Audi Q7 3.0 TDI 233 MP+EGR 2007), 383723, ';

// '|' is a separator, '*' after a name is a pressed button
const toolbars = [
    'gears hat printer | cascade tiles | first prev grid next last | tree* find scroll | steps | back binoc binocg fwd | f v p ARROW EPROM | help what',
    'hand | chips | chip1 chip2 chip3 chip4 chipn | chipf',
    'POINT1 SPIN POINT2 SPIN | GAPS wave1 wave2 | table | b8 b16* b32 bfl | dec* hex bin | hilo sign | pct delta x1 org orgs',
    'wiz wiz1 wiz2 | swap | sync red* split* | GAPM SPIND SPIND GAPL SPIND GAPX SPIND'
];

const spin = (cls) => `<span class="spin ${cls}">
    <button><svg viewBox="0 0 6 4"><path d="M0 4l3-4 3 4z"/></svg></button>
    <button><svg viewBox="0 0 6 4"><path d="M0 0l3 4 3-4z"/></svg></button></span>`;

const parts = {
    '|': '<i class="sep"></i>',
    ARROW: '<button class="drop-arrow"><svg><use href="#i-down-s"/></svg></button>',
    EPROM: '<span class="eprom">Eprom</span>',
    POINT1: '<span class="points first">13 Point</span>',
    POINT2: '<span class="points next">13 Point</span>',
    SPIN: spin(''),
    SPIND: spin('dim'),
    GAPS: '<i class="gap-s"></i>',
    GAPM: '<i class="gap-m"></i>',
    GAPL: '<i class="gap-l"></i>',
    GAPX: '<i class="gap-xl"></i>'
};

function tool(word) {
    if (parts[word]) return parts[word];
    const name = word.replace('*', '');
    let cls = 'tool';
    if (word.endsWith('*')) cls += ' on';
    if (['hilo', 'org', 'orgs'].includes(name)) cls += ' wide';
    return `<button class="${cls}"><svg><use href="#i-${name}"/></svg></button>`;
}

// One entry per line: folders start with '#'
const maps = `1F8420,P° Rail 3,15x16
1F8664,P° Rail 4,15x16
1F8FCA,P° Rail Max,8x16
#Quantity Injected
1D2DAC,Limit IQ f° Temperature,10x10
1D2EEE,Limite IQ f° Speed,10x6
1D2FEA,Limit IQ f° Temperature,10x10
1D30D6,Limit IQ,8x8
1D321E,Limit IQ f°  Exhaust T°,8x8
1EE964,Limit IQ f° Temperature,10x10
1EEA58,Limit IQ f° Temperature,10x10
#Smoke map
1D45F6,Smoke map 1,13x16
1D47D4,Smoke map 2,13x16
1D49B2,Smoke map 3,13x16
1D4B90,Smoke map 4,13x16
#SOI
1C9CB0,SOI,8x8
1C9D54,SOI,8x8
1C9DF8,SOI,8x8
1D1344,SOI,8x8
#TI
1E9BEE,TI,20x15
#Torque
1D2AB0,Torque Limitier,22x4
#Torque IQ Convert
1D5144,Torque IQ convert,18x16
1D53CA,Torque IQ convert,17x16
1D5652,Torque IQ convert,17x16
1D58DA,Torque IQ convert,17x16
1D5B62,Torque IQ convert,17x16
#Turbo
1F0688,Turbo Boost P°,10x15
1F0800,Turbo Boost P°,10x15
1F096E,Turbo Boost Limiter,7x13
1F0A52,Turbo Single Value,1x1
1F0A8A,Turbo Boost fct T°,10x14,strong picked
1F0BD6,Turbo Boost fct T°,10x14,strong`.split('\n');

function mapRow(line) {
    if (line[0] === '#') {
        return `<tr class="folder"><td><svg><use href="#i-folder"/></svg></td><td colspan="3">${line.slice(1)}</td></tr>`;
    }
    const [addr, name, size, cls = ''] = line.split(',');
    const [w, h] = size.split('x').map(n => Math.max(1, Math.round(n / 2)));
    return `<tr class="${cls}"><td></td><td>${addr}</td><td>${name}</td>
        <td><div class="size"><span class="size-box"><i style="width:${w}px;height:${h}px"></i></span>${size}</div></td></tr>`;
}

const rpm = [0, 1000, 1150, 1250, 1500, 1750, 1850, 2250, 2500, 3000, 3500, 3750, 4000];

const boostLow = [
    [700, 700, 700, 700, 700, 700, 700, 700, 700, 700],
    [700, 700, 700, 700, 700, 700, 890, 890, 1069, 1069],
    [700, 934, 954, 974, 999, 1038, 1144, 1144, 1196, 1196],
    [700, 940, 967, 999, 1029, 1102, 1181, 1181, 1289, 1289],
    [700, 952, 995, 1023, 1064, 1162, 1284, 1284, 1510, 1510],
    [700, 1019, 1065, 1109, 1136, 1252, 1413, 1413, 1613, 1613],
    [738, 1104, 1186, 1238, 1309, 1449, 1625, 1625, 1815, 1855],
    [830, 1195, 1277, 1340, 1433, 1608, 1739, 1739, 1870, 1920],
    [907, 1238, 1343, 1435, 1509, 1703, 1817, 1817, 2065, 2070],
    [1000, 1320, 1416, 1485, 1586, 1740, 1894, 1894, 2280, 2280],
    [1046, 1287, 1368, 1448, 1523, 1639, 1844, 1844, 2135, 2140],
    [1080, 1258, 1320, 1400, 1488, 1608, 1822, 1822, 2000, 2000]
];

const boostHigh = [
    [1000, 1000, 1000, 1000, 1000, 1000, 1250, 1250, 1300, 1300],
    [1000, 1000, 1000, 1000, 1000, 1000, 1250, 1250, 1300, 1300],
    [1000, 1048, 1077, 1106, 1142, 1197, 1349, 1349, 1480, 1480],
    [1000, 1062, 1101, 1146, 1198, 1260, 1444, 1444, 1650, 1650],
    [1000, 1079, 1140, 1186, 1248, 1329, 1563, 1563, 2040, 2050],
    [1000, 1094, 1163, 1231, 1312, 1418, 1668, 1668, 2180, 2250],
    [1000, 1140, 1221, 1310, 1420, 1543, 1794, 1794, 2230, 2310],
    [1000, 1162, 1255, 1348, 1454, 1578, 1841, 1841, 2275, 2340],
    [1130, 1195, 1315, 1415, 1530, 1650, 1880, 1880, 2300, 2350],
    [1246, 1304, 1390, 1480, 1595, 1715, 1920, 1920, 2300, 2350],
    [1330, 1390, 1440, 1515, 1630, 1750, 1925, 1925, 2300, 2315],
    [1380, 1430, 1470, 1560, 1675, 1770, 1940, 1940, 2300, 2300],
    [1400, 1470, 1500, 1605, 1720, 1815, 1960, 1960, 2300, 2300]
];

const tempLow = [250, 400, 1000, 1500, 2000, 2500, 3000, 3500, 5500, 6500];
const tempHigh = [250, 400, 1000, 1500, 2000, 2500, 3000, 3500, 5500, 6100];

const low = { data: boostLow, min: 700, max: 2280 };
const high = { data: boostHigh, min: 1000, max: 2350 };
const plain = { caption: '−(−,−)/−', ux: '−', uy: '−' };
const boost = { caption: 'Boost(IQ,Engine Speed)/mbar', ux: 'mg', uy: 'RPM' };

const backWindows = [
    { pos: 'left l1', name: 'Turbo Single Value *', caption: '/−', ux: '', uy: '', x: [''], mark: 0, rows: 0, single: true },
    { pos: 'right r1', name: 'Turbo Boost P° *', active: true, ...boost, x: [3, 4, 10, 15, 20, 25, 35, 45, 55, 61], mark: 2, rows: 0 }
];

const frontWindows = [
    { pos: 'left l1', ...plain, ...low, x: tempLow, mark: 8, rows: 9, isSel: (r, c) => r > 2 || (r === 2 && c > 3) },
    { pos: 'left l2', ...plain, ...high, x: tempHigh, mark: 8, rows: 13 },
    { pos: 'left l3', ...plain, ...low, x: tempLow, mark: 9, rows: 4 },
    { pos: 'right r1', ...plain, ...high, x: tempHigh, mark: 8, rows: 9 },
    { pos: 'right r2', ...boost, ...low, x: [3, 4, 10, 15, 20, 25, 30, 35, 55, 65], mark: 9, rows: 12, isSel: (r, c) => r === 3 && c === 9 },
    { pos: 'right r3', active: true, ...plain, ...high, x: tempHigh, mark: 9, rows: 6, cursor: [0, 9] }
];

function mapTable(w) {
    const n = w.x.length;
    const isSel = w.isSel || (() => false);
    // labels alternate between the two header rows
    const heads = (odd) => w.x.map((v, i) => `<th class="x">${i % 2 === odd ? v : ''}</th>`).join('');
    let html = `<table class="map${w.single ? ' single' : ''}"><colgroup><col class="k-head">${'<col class="k-cell">'.repeat(n)}<col class="k-gap"><col class="${w.single ? 'k-bar1' : 'k-bars'}"></colgroup>
        <tr><th></th><th class="caption" colspan="${n}">${w.caption}</th></tr>
        <tr><th class="unit-x">${w.ux}</th>${heads(0)}</tr>
        <tr><th class="unit-y">${w.uy}</th>${heads(1)}</tr>
        <tr class="rule"><td></td>${w.x.map((v, i) => `<td${i === w.mark ? ' class="mark"' : ''}></td>`).join('')}<td></td><td></td></tr>`;

    for (let r = 0; r < w.rows; r++) {
        html += `<tr><th class="row-head${r === 0 ? ' row-mark' : ''}">${rpm[r]}</th>`;
        let bars = '';
        w.data[r].forEach((v, c) => {
            const sel = isSel(r, c) ? 'sel' : '';
            const cur = w.cursor && w.cursor[0] === r && w.cursor[1] === c ? 'cursor' : '';
            const h = Math.floor((v - w.min) / (w.max - w.min) * 14);
            html += `<td class="${sel}${cur}">${v}</td>`;
            bars += `<span class="${sel}"><i style="height:${h}px"></i></span>`;
        });
        html += `<td></td><td class="bars"><div>${bars}</div></td></tr>`;
    }
    return html + '</table>';
}

function mapWindow(w) {
    return `<article class="win ${w.pos}${w.active ? ' active' : ''}">
        <div class="win-title"><svg><use href="#i-map"/></svg><span>${NAME}${w.name || 'Turbo Boost fct T° *'}</span>
            <button><svg><use href="#i-wmin"/></svg></button><button><svg><use href="#i-wmax"/></svg></button><button><svg><use href="#i-wx"/></svg></button></div>
        <div class="client"><div class="map-view">${mapTable(w)}</div>
            <div class="scroll"><button><svg><use href="#i-up"/></svg></button><i class="thumb"></i><button><svg><use href="#i-dn"/></svg></button></div></div>
    </article>`;
}

function build(id, windows) {
    const app = document.getElementById(id);
    app.append(document.getElementById('frame').content.cloneNode(true));
    app.querySelector('.toolbars').innerHTML = toolbars.map(t => `<div class="toolbar">${t.split(' ').map(tool).join('')}</div>`).join('');
    app.querySelector('.maps tbody').innerHTML = maps.map(mapRow).join('');
    app.querySelector('.mdi').innerHTML = windows.map(mapWindow).join('');
}

build('back', backWindows);
build('front', frontWindows);
```
